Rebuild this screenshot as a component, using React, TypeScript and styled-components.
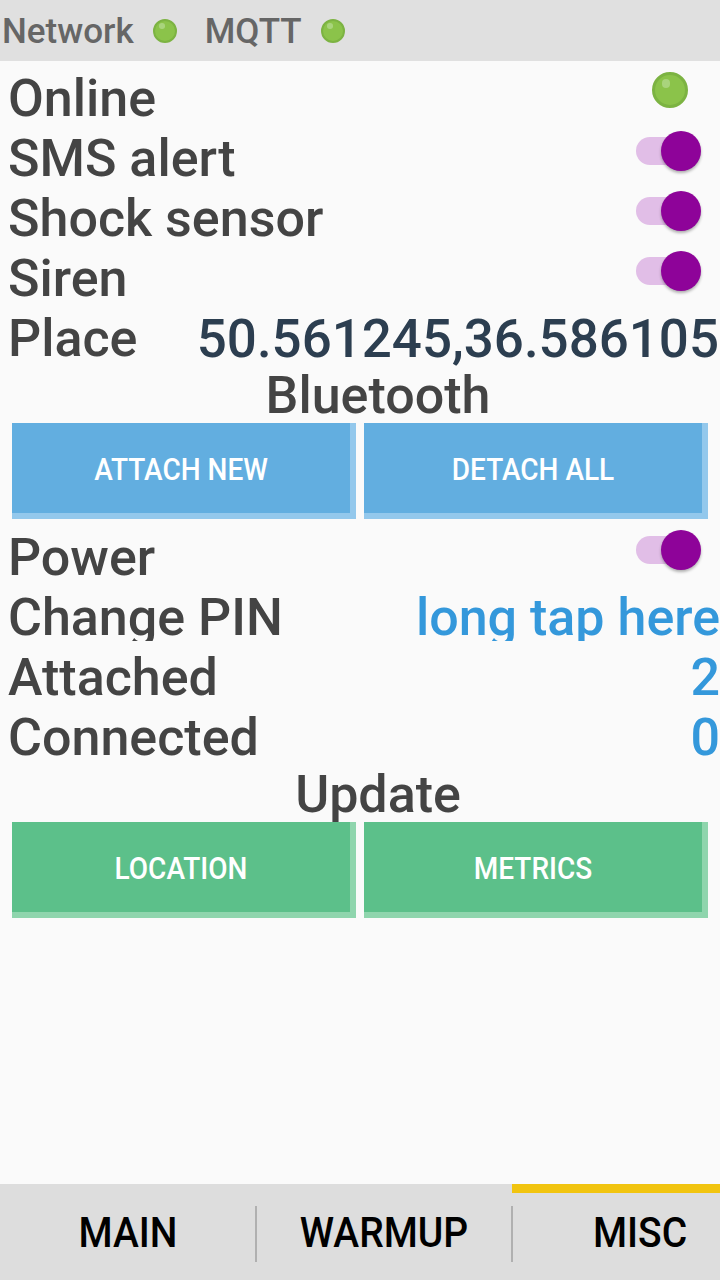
import React from "react";
import styled, { createGlobalStyle, css } from "styled-components";

const GlobalStyle = createGlobalStyle`
  html, body {
    margin: 0;
    padding: 0;
    background: #fafafa;
    font-family: Roboto, "Noto Sans", sans-serif;
  }
  * { box-sizing: border-box; }
`;

const Screen = styled.div`
  width: 720px;
  height: 1280px;
  display: flex;
  flex-direction: column;
  overflow: hidden;
  background: #fafafa;
`;

const StatusBar = styled.header`
  height: 61px;
  flex: 0 0 61px;
  background: #e0e0e0;
  display: flex;
  align-items: center;
  padding-left: 2px;
`;

const StatusLabel = styled.span`
  font-size: 35px;
  font-weight: 500;
  line-height: 1;
  color: #666666;
  margin-top: 2px;
`;

const Led = styled.span<{ $size: number }>`
  position: relative;
  display: inline-block;
  width: ${(p) => p.$size}px;
  height: ${(p) => p.$size}px;
  border-radius: 50%;
  background: #8bc34a;
  border: ${(p) => (p.$size > 30 ? 3 : 2)}px solid #7cb342;
  &::after {
    content: "";
    position: absolute;
    left: 22%;
    top: 14%;
    width: 28%;
    height: 28%;
    border-radius: 50%;
    background: #a9d47c;
  }
`;

const StatusItem = styled.div<{ $gap: number }>`
  display: flex;
  align-items: center;
  gap: 19px;
  margin-right: ${(p) => p.$gap}px;
`;

const Content = styled.main`
  flex: 1;
  padding-top: 8px;
  display: flex;
  flex-direction: column;
`;

const Row = styled.div<{ $clip?: number; $padRight?: number }>`
  height: 60px;
  display: flex;
  justify-content: space-between;
  align-items: flex-start;
  padding: 0 ${(p) => p.$padRight ?? 19}px 0 8px;
  ${(p) =>
    p.$clip &&
    css`
      & > span {
        height: ${p.$clip}px;
        overflow: hidden;
      }
    `}
`;

const Label = styled.span`
  font-size: 52px;
  font-weight: 500;
  line-height: 60px;
  color: #444444;
  white-space: nowrap;
`;

const Value = styled.span<{ $color: string; $size?: number }>`
  font-size: ${(p) => p.$size ?? 52}px;
  font-weight: 500;
  line-height: 60px;
  color: ${(p) => p.$color};
  white-space: nowrap;
`;

const ControlSlot = styled.div<{ $top: number }>`
  margin-top: ${(p) => p.$top}px;
  display: flex;
  align-items: center;
`;

const SwitchTrack = styled.div`
  position: relative;
  width: 65px;
  height: 40px;
  display: flex;
  align-items: center;
  &::before {
    content: "";
    width: 56px;
    height: 28px;
    border-radius: 14px;
    background: #e1bee7;
  }
`;

const SwitchThumb = styled.span`
  position: absolute;
  right: 0;
  top: 0;
  width: 40px;
  height: 40px;
  border-radius: 50%;
  background: #8e0399;
  box-shadow: 0 2px 3px rgba(0, 0, 0, 0.3);
`;

const SectionTitle = styled.div`
  height: 54px;
  font-size: 52px;
  font-weight: 500;
  line-height: 54px;
  text-align: center;
  padding-left: 36px;
  color: #444444;
`;

const ButtonRow = styled.div`
  height: 105px;
  display: flex;
  gap: 8px;
  padding: 0 12px;
  align-items: flex-start;
`;

const ActionButton = styled.button<{ $bg: string; $edge: string }>`
  width: 344px;
  height: 96px;
  border: none;
  border-right: 6px solid ${(p) => p.$edge};
  border-bottom: 6px solid ${(p) => p.$edge};
  background: ${(p) => p.$bg};
  color: #ffffff;
  font-family: Roboto, sans-serif;
  font-size: 28px;
  font-weight: 500;
  padding: 0;
  display: flex;
  align-items: center;
  justify-content: center;
  cursor: pointer;
  & > span {
    display: inline-block;
    transform: scaleY(1.12);
    margin-top: 2px;
  }
`;

const TabBar = styled.nav`
  height: 96px;
  flex: 0 0 96px;
  background: #dddddd;
  display: flex;
  align-items: stretch;
  overflow: hidden;
`;

const Tab = styled.div<{ $active?: boolean }>`
  flex: 0 0 256px;
  display: flex;
  align-items: center;
  justify-content: center;
  font-size: 39px;
  font-weight: 500;
  color: #000000;
  box-shadow: ${(p) => (p.$active ? "inset 0 9px 0 #f1c40f" : "none")};
  & > span {
    display: inline-block;
    transform: scaleY(1.08);
    margin-top: 2px;
  }
`;

const TabDivider = styled.div`
  flex: 0 0 2px;
  align-self: center;
  height: 56px;
  margin: 4px -1px 0;
  background: #b0b0b0;
  position: relative;
`;

const Switch = () => (
  <ControlSlot $top={2}>
    <SwitchTrack>
      <SwitchThumb />
    </SwitchTrack>
  </ControlSlot>
);

export default function App() {
  return (
    <>
      <GlobalStyle />
      <Screen>
        <StatusBar>
          <StatusItem $gap={28}>
            <StatusLabel>Network</StatusLabel>
            <Led $size={24} />
          </StatusItem>
          <StatusItem $gap={0}>
            <StatusLabel>MQTT</StatusLabel>
            <Led $size={24} />
          </StatusItem>
        </StatusBar>
        <Content>
          <Row $padRight={32}>
            <Label>Online</Label>
            <ControlSlot $top={3}>
              <Led $size={36} />
            </ControlSlot>
          </Row>
          <Row>
            <Label>SMS alert</Label>
            <Switch />
          </Row>
          <Row>
            <Label>Shock sensor</Label>
            <Switch />
          </Row>
          <Row>
            <Label>Siren</Label>
            <Switch />
          </Row>
          <Row $padRight={1}>
            <Label>Place</Label>
            <Value $color="#2c3e50" $size={52.9}>
              50.561245,36.586105
            </Value>
          </Row>
          <SectionTitle>Bluetooth</SectionTitle>
          <ButtonRow>
            <ActionButton $bg="#62aee0" $edge="#93c8ec">
              <span>ATTACH NEW</span>
            </ActionButton>
            <ActionButton $bg="#62aee0" $edge="#93c8ec">
              <span>DETACH ALL</span>
            </ActionButton>
          </ButtonRow>
          <Row>
            <Label>Power</Label>
            <Switch />
          </Row>
          <Row $padRight={0} $clip={53}>
            <Label>Change PIN</Label>
            <Value $color="#3498db">long tap here</Value>
          </Row>
          <Row $padRight={0}>
            <Label>Attached</Label>
            <Value $color="#3498db">2</Value>
          </Row>
          <Row $padRight={0}>
            <Label>Connected</Label>
            <Value $color="#3498db">0</Value>
          </Row>
          <SectionTitle>Update</SectionTitle>
          <ButtonRow>
            <ActionButton $bg="#5cc08a" $edge="#8fd5ad">
              <span>LOCATION</span>
            </ActionButton>
            <ActionButton $bg="#5cc08a" $edge="#8fd5ad">
              <span>METRICS</span>
            </ActionButton>
          </ButtonRow>
        </Content>
        <TabBar>
          <Tab>
            <span>MAIN</span>
          </Tab>
          <TabDivider />
          <Tab>
            <span>WARMUP</span>
          </Tab>
          <TabDivider />
          <Tab $active>
            <span>MISC</span>
          </Tab>
        </TabBar>
      </Screen>
    </>
  );
}
